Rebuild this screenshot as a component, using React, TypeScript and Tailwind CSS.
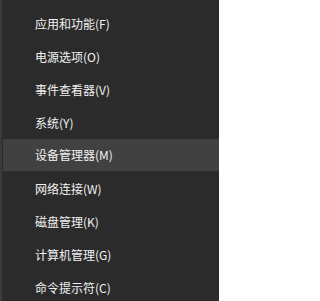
import React from "react";

const items = [
  "应用和功能(F)",
  "电源选项(O)",
  "事件查看器(V)",
  "系统(Y)",
  "设备管理器(M)",
  "网络连接(W)",
  "磁盘管理(K)",
  "计算机管理(G)",
  "命令提示符(C)",
];

export default function App() {
  return (
    <div
      className="w-[219px] h-[301px] overflow-hidden bg-[#2b2b2b] border-l-2 border-[#3b3b3b] pt-[7px] text-[12px] text-[#f2f2f2]"
      style={{ fontFamily: '"Microsoft YaHei", "Noto Sans CJK SC", "Noto Sans", sans-serif' }}
    >
      {items.map((t, i) => (
        <div
          key={t}
          className={
            i === 4
              ? "h-[32px] mb-[1px] ml-[1px] flex items-center pl-[32px] bg-[#414141]"
              : "h-[33px] flex items-center pl-[33px]"
          }
        >
          {t}
        </div>
      ))}
    </div>
  );
}
